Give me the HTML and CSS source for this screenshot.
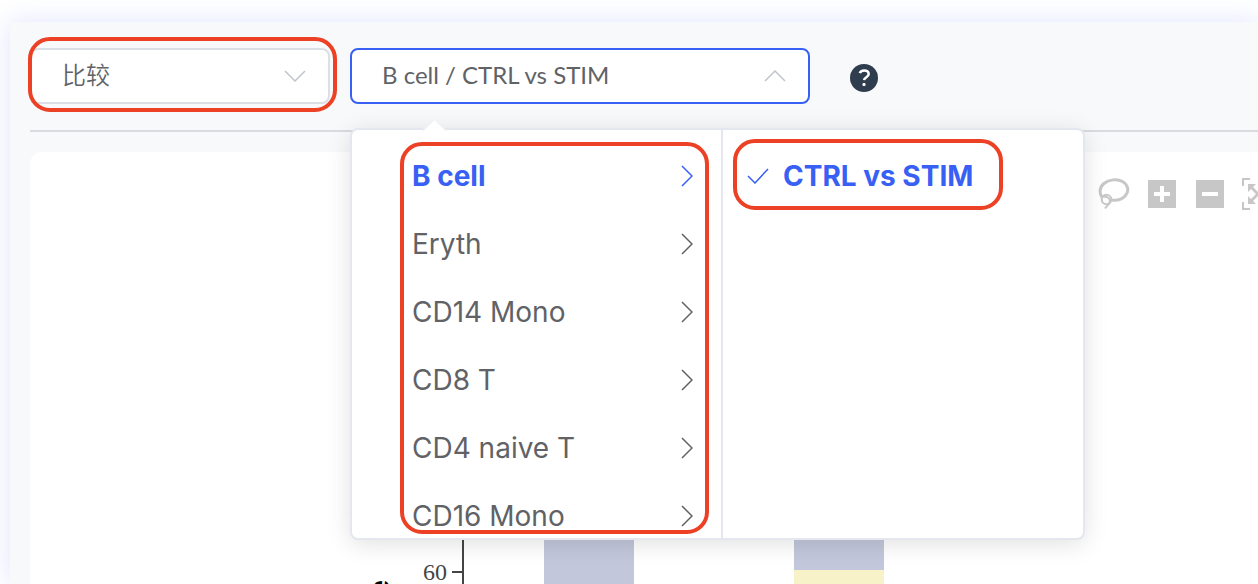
FILE: index.html
```
<!DOCTYPE html>
<html lang="zh-CN">
<head>
  <meta charset="UTF-8" />
  <meta name="viewport" content="width=device-width, initial-scale=1.0" />
  <title>比较</title>
  <link rel="stylesheet" href="styles.css">
</head>
<body>
  <svg width="0" height="0" class="sprite" aria-hidden="true">
    <symbol id="arrow-right" viewBox="0 0 12 22">
      <path d="M1 1l10 10L1 21" />
    </symbol>
  </svg>

  <main class="panel">
    <div class="toolbar">
      <div class="field field-mode">
        <select class="control" aria-label="分析类型">
          <option>比较</option>
        </select>
        <svg class="field-arrow" viewBox="0 0 22 12"><path d="M1 1l10 10L21 1" /></svg>
        <span class="mark mark-field"></span>
      </div>

      <div class="field field-compare">
        <input class="control is-focus" type="text" value="B cell / CTRL vs STIM" aria-label="Comparison" readonly>
        <svg class="field-arrow" viewBox="0 0 22 12"><path d="M1 11L11 1l10 10" /></svg>

        <div class="dropdown">
          <div class="menu">
            <ul class="menu-list">
              <li><button type="button" class="item active">B cell<svg class="item-arrow"><use href="#arrow-right" /></svg></button></li>
              <li><button type="button" class="item">Eryth<svg class="item-arrow"><use href="#arrow-right" /></svg></button></li>
              <li><button type="button" class="item">CD14 Mono<svg class="item-arrow"><use href="#arrow-right" /></svg></button></li>
              <li><button type="button" class="item">CD8 T<svg class="item-arrow"><use href="#arrow-right" /></svg></button></li>
              <li><button type="button" class="item">CD4 naive T<svg class="item-arrow"><use href="#arrow-right" /></svg></button></li>
              <li><button type="button" class="item">CD16 Mono<svg class="item-arrow"><use href="#arrow-right" /></svg></button></li>
            </ul>
            <span class="mark mark-menu"></span>
          </div>
          <div class="menu menu-sub">
            <ul class="menu-list">
              <li>
                <button type="button" class="item active">
                  <svg class="item-check" viewBox="0 0 22 16"><path d="M1 8l7 7L21 1" /></svg>CTRL vs STIM
                </button>
              </li>
            </ul>
            <span class="mark mark-option"></span>
          </div>
        </div>
      </div>

      <button type="button" class="help" aria-label="Help">
        <svg viewBox="0 0 28 28">
          <circle cx="14" cy="14" r="14" />
          <path d="M9.800 9.200C10.400 7.200 12 6.400 14.100 6.400c2.700 0 4.600 1.500 4.600 3.700 0 3.200-4.400 3-4.600 6" />
          <rect x="12.500" y="19" width="3" height="3" rx="1" />
        </svg>
      </button>
    </div>

    <section class="card">
      <div class="modebar">
        <button type="button" class="tool tool-wide" aria-label="Lasso select">
          <svg viewBox="0 0 32 32">
            <path d="M4 19C1 15 1.500 9 6 5.500c5-4 13-5 18.500-2s7 9.500 3 14c-3.500 4-9 5.500-14.500 4.500" />
            <circle cx="8.500" cy="21.500" r="4.800" class="thin" />
            <path d="M3.500 18.500c4-.5 8 1 8.500 4 .3 3-2.500 4.500-5 8" class="thin" />
          </svg>
        </button>
        <button type="button" class="tool" aria-label="Zoom in">
          <svg viewBox="0 0 28 28"><path class="solid" d="M0 0h28v28H0zM12 6v6H6v4h6v6h4v-6h6v-4h-6V6z" /></svg>
        </button>
        <button type="button" class="tool" aria-label="Zoom out">
          <svg viewBox="0 0 28 28"><path class="solid" d="M0 0h28v28H0zM6 12v4h16v-4z" /></svg>
        </button>
        <button type="button" class="tool tool-wide" aria-label="Autoscale">
          <svg viewBox="0 0 32 32">
            <path class="solid" d="M0 0h8v2H2v6H0zM24 0h8v8h-2V2h-6zM0 24h2v6h6v2H0zM30 24h2v8h-8v-2h6z" />
            <path class="solid" d="M6 6h8l-3 3 5 5 5-5-3-3h8v8l-3-3-5 5 5 5 3-3v8h-8l3-3-5-5-5 5 3 3H6v-8l3 3 5-5-5-5-3 3z" />
          </svg>
        </button>
      </div>

      <svg class="chart" width="1228" height="480" role="img" aria-label="Stacked bar chart">
        <rect class="bar-blue" x="514" y="60" width="90" height="420" />
        <rect class="bar-blue" x="764" y="60" width="90" height="274" />
        <rect class="bar-yellow" x="764" y="334" width="90" height="146" />
        <path class="axis" d="M433 60v420M422 336h11" />
        <text class="tick" x="417" y="344" text-anchor="end">60</text>
        <text class="axis-title" transform="translate(359 344) rotate(-90)" text-anchor="end">Percentage</text>
      </svg>
    </section>
  </main>
</body>
</html>
```
FILE: styles.css
```
* {
  box-sizing: border-box;
}
body {
  margin: 0;
  height: 100vh;
  padding: 22px 0 0 10px;
  overflow: hidden;
  background: #fff;
  color: #606266;
  font-family: Inter, "Noto Sans CJK SC", sans-serif;
}
button {
  border: 0;
  padding: 0;
  background: none;
  color: inherit;
  font: inherit;
}
svg {
  display: block;
  fill: none;
}
.sprite {
  position: absolute;
}
.panel {
  height: 100%;
  display: flex;
  flex-direction: column;
  padding-left: 20px;
  background: #f8f9fb;
  box-shadow: 0 0 24px rgba(56, 96, 255, 0.16);
}

/* toolbar */
.toolbar {
  display: flex;
  align-items: center;
  gap: 20px;
  padding: 26px 0;
  border-bottom: 2px solid #d9dbdf;
}
.field {
  position: relative;
}
.field-mode {
  width: 300px;
}
.field-compare {
  width: 460px;
}
.control {
  display: block;
  width: 100%;
  height: 56px;
  padding: 0 60px 3px 30px;
  border: 2px solid #dcdfe6;
  border-radius: 8px;
  outline: 0;
  background: #fff;
  color: #606266;
  font-family: Lato, "Noto Sans CJK SC", sans-serif;
  font-size: 24px;
  font-weight: 350;
  appearance: none;
}
.control.is-focus {
  border-color: #3860f4;
  font-weight: 400;
}
.field-arrow {
  position: absolute;
  top: 22px;
  right: 24px;
  width: 22px;
  height: 12px;
  stroke: #c0c4cc;
  stroke-width: 1.5;
}
.help {
  width: 28px;
  height: 28px;
  margin: 4px 0 0 20px;
}
.help circle {
  fill: #303d4e;
}
.help path {
  stroke: #fff;
  stroke-width: 2.5;
}
.help rect {
  fill: #fff;
}

/* cascading menu */
.dropdown {
  position: absolute;
  z-index: 10;
  top: 80px;
  left: 0;
  display: flex;
  border: 2px solid #e4e7ed;
  border-radius: 8px;
  background: #fff;
  box-shadow: 0 4px 24px rgba(0, 0, 0, 0.12);
}
.dropdown::before {
  content: "";
  position: absolute;
  top: -8px;
  left: 74px;
  width: 16px;
  height: 16px;
  background: #fff;
  border: 1px solid #ebeef5;
  border-right: 0;
  border-bottom: 0;
  transform: rotate(45deg);
}
.menu {
  position: relative;
  width: 369px;
  height: 408px;
}
.menu-sub {
  width: 362px;
  border-left: 2px solid #e4e7ed;
}
.menu-list {
  height: 100%;
  margin: 0;
  padding: 12px 0;
  overflow: hidden;
  list-style: none;
}
.item {
  display: flex;
  align-items: center;
  width: 100%;
  height: 68px;
  padding: 0 28px 0 60px;
  font-size: 28px;
  text-align: left;
}
.item.active {
  color: #3860f4;
  font-weight: 700;
}
.item-arrow {
  width: 12px;
  height: 22px;
  margin-left: auto;
  stroke: currentColor;
  stroke-width: 1.5;
}
.menu-sub .item {
  padding-left: 24px;
}
.item-check {
  width: 22px;
  height: 16px;
  margin-right: 14px;
  stroke: currentColor;
  stroke-width: 1.5;
}

/* red highlight frames */
.mark {
  position: absolute;
  border: 4px solid #ec4125;
  border-radius: 22px;
  pointer-events: none;
}
.mark-field {
  inset: -11px -7px -8px -2px;
}
.mark-menu {
  inset: 12px 12px 4px 48px;
}
.mark-option {
  top: 9px;
  left: 10px;
  width: 270px;
  height: 71px;
}

/* chart */
.card {
  flex: 1;
  min-height: 0;
  margin-top: 20px;
  border-radius: 12px 0 0 0;
  background: #fff;
  overflow: hidden;
}
.modebar {
  display: flex;
  align-items: center;
  justify-content: flex-end;
  gap: 20px;
  height: 84px;
  margin-right: -14px;
}
.tool {
  flex: none;
  width: 28px;
  height: 28px;
}
.tool-wide {
  width: 32px;
  height: 32px;
  margin: 0 -2px;
}
.tool svg {
  stroke: #c7c7c7;
  stroke-width: 3;
}
.tool .thin {
  stroke-width: 2;
}
.tool .solid {
  fill: #c7c7c7;
  fill-rule: evenodd;
  stroke: none;
}
.bar-blue {
  fill: #c2c7db;
}
.bar-yellow {
  fill: #f8f2c8;
}
.axis {
  stroke: #444;
  stroke-width: 2;
}
.tick {
  fill: #444;
  font-family: "Liberation Serif", serif;
  font-size: 24px;
}
.axis-title {
  fill: #000;
  font-family: "Liberation Sans", sans-serif;
  font-size: 28px;
  font-weight: 700;
}
```
